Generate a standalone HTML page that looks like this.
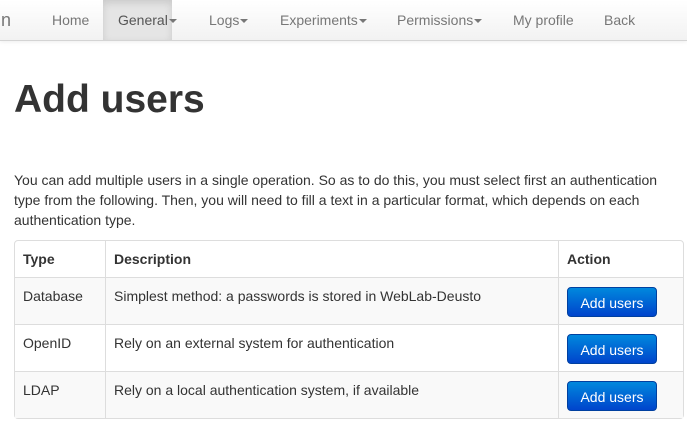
<!DOCTYPE html>
<html><head><style>
body{margin:0;font-family:"Liberation Sans",sans-serif;font-size:14px;color:#333;background:#fff;width:687px;height:437px;overflow:hidden;position:relative}
.nav{position:absolute;left:0;top:0;width:687px;height:40px;background:linear-gradient(#fff,#f2f2f2);border-bottom:1px solid #d4d4d4;box-shadow:0 1px 4px rgba(0,0,0,.07)}
.nav span{position:absolute;top:12px;color:#777;font-size:14px}
.nav .act{position:absolute;left:103px;top:0;width:69px;height:40px;background:#e5e5e5;box-shadow:inset 0 3px 8px rgba(0,0,0,.12)}
.car{display:inline-block;width:0;height:0;border-left:4px solid transparent;border-right:4px solid transparent;border-top:4px solid #777;vertical-align:middle;margin-left:1px}
h1{position:absolute;left:14px;top:79px;margin:0;font-size:39px;font-weight:bold;line-height:42px;color:#333}
p{position:absolute;left:14px;top:170px;margin:0;width:665px;line-height:20px}
table{position:absolute;left:14px;top:240px;width:670px;border-collapse:separate;border-spacing:0;border:1px solid #ddd;border-radius:4px}
td,th{border-left:1px solid #ddd;border-top:1px solid #ddd;padding:0 8px;text-align:left;vertical-align:top}
th{height:36px;line-height:36px;border-top:none}
td{height:47px;padding-top:8px;box-sizing:border-box;line-height:20px}
tr td:first-child,tr th:first-child{border-left:none}
tr.o td{background:#f9f9f9}
.b{display:inline-block;width:90px;height:30px;margin-top:1px;line-height:30px;text-align:center;color:#fff;border-radius:4px;background:linear-gradient(#0088dd,#0044cc);border:1px solid #0040a0;box-sizing:border-box;font-size:14px}
</style></head><body>
<div class="nav"><div class="act"></div>
<span style="left:-3px;font-size:18px;top:10px">in</span>
<span style="left:52px">Home</span>
<span style="left:118px;color:#555">General<i class="car"></i></span>
<span style="left:209px">Logs<i class="car"></i></span>
<span style="left:280px">Experiments<i class="car"></i></span>
<span style="left:397px">Permissions<i class="car"></i></span>
<span style="left:513px">My profile</span>
<span style="left:604px">Back</span>
</div>
<h1>Add users</h1>
<p>You can add multiple users in a single operation. So as to do this, you must select first an authentication type from the following. Then, you will need to fill a text in a particular format, which depends on each authentication type.</p>
<table>
<tr><th style="width:74px">Type</th><th style="width:436px">Description</th><th>Action</th></tr>
<tr class="o"><td>Database</td><td>Simplest method: a passwords is stored in WebLab-Deusto</td><td><span class="b">Add users</span></td></tr>
<tr><td>OpenID</td><td>Rely on an external system for authentication</td><td><span class="b">Add users</span></td></tr>
<tr class="o"><td>LDAP</td><td>Rely on a local authentication system, if available</td><td><span class="b">Add users</span></td></tr>
</table>
</body></html>
